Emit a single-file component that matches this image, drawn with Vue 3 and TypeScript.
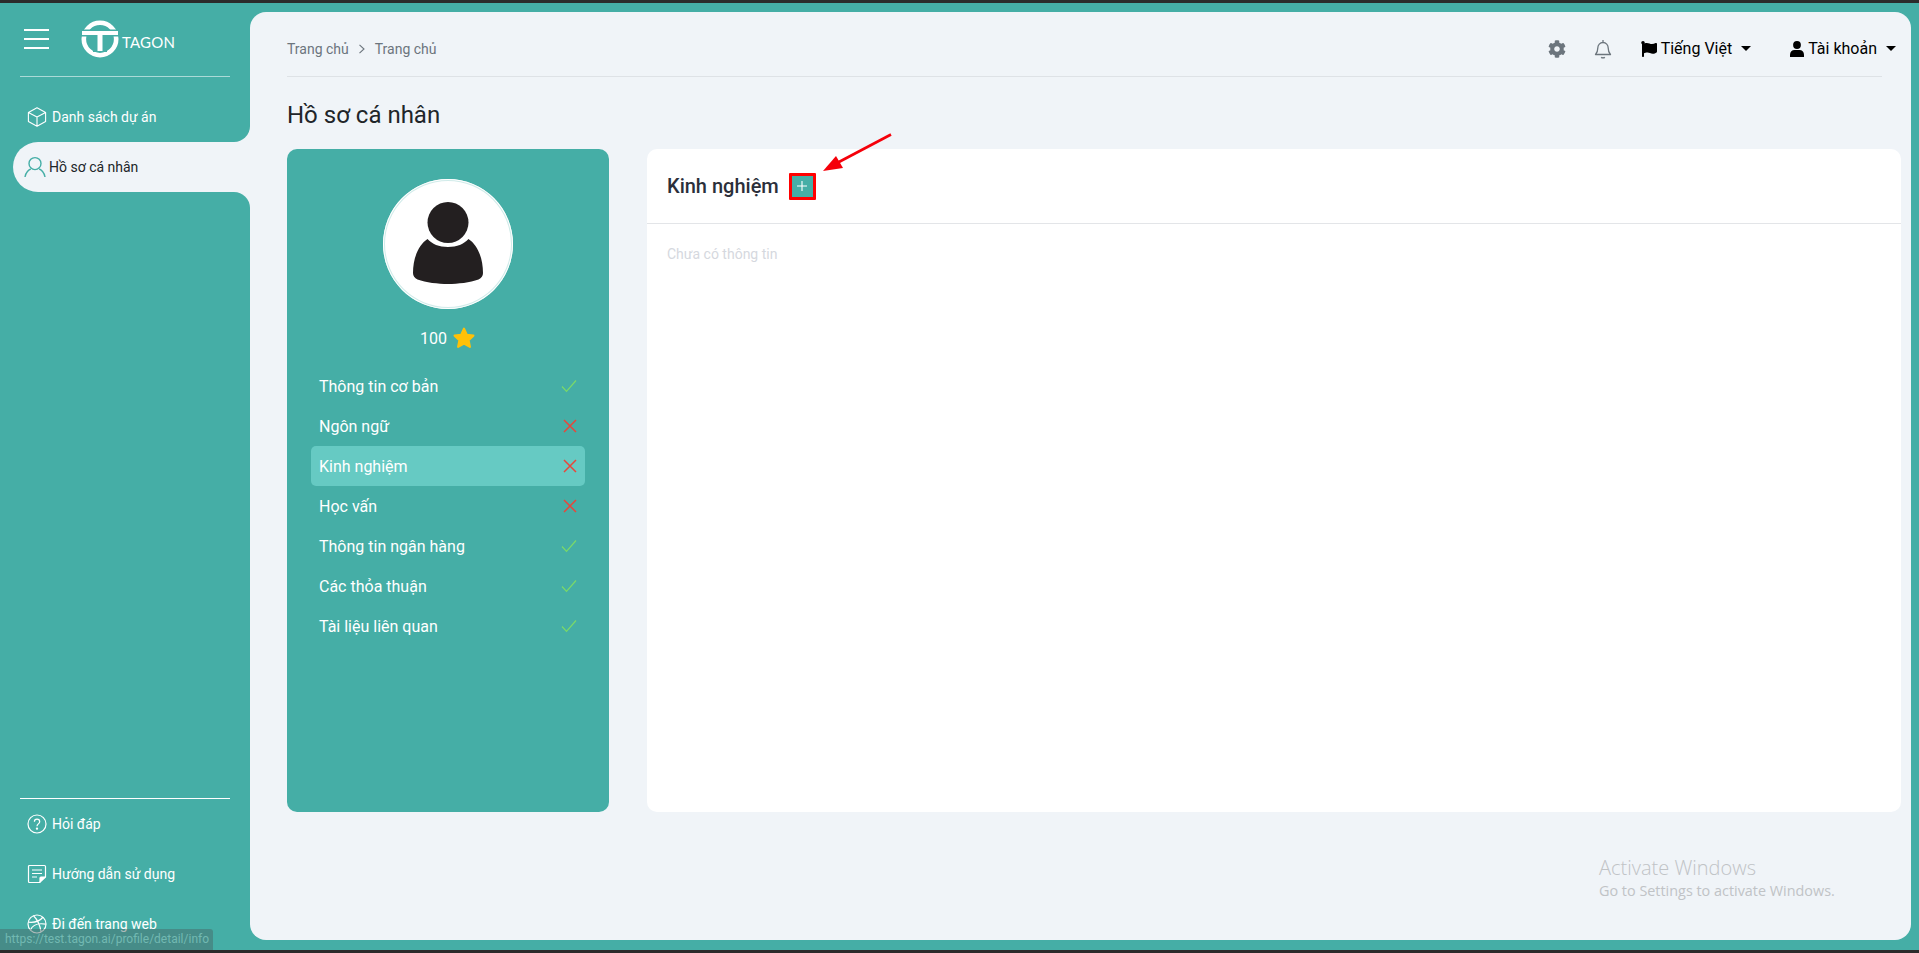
<script setup lang="ts">
interface Section {
  label: string
  done: boolean
  active?: boolean
}

const sections: Section[] = [
  { label: 'Thông tin cơ bản', done: true },
  { label: 'Ngôn ngữ', done: false },
  { label: 'Kinh nghiệm', done: false, active: true },
  { label: 'Học vấn', done: false },
  { label: 'Thông tin ngân hàng', done: true },
  { label: 'Các thỏa thuận', done: true },
  { label: 'Tài liệu liên quan', done: true },
]
</script>

<template>
  <div class="screen">
    <div class="shell">
      <aside class="sidebar">
        <div class="brand">
          <button class="burger" aria-label="menu"><span></span><span></span><span></span></button>
          <svg class="logo" width="38" height="38" viewBox="0 0 38 38">
            <circle cx="19" cy="19" r="16.2" fill="none" stroke="#fff" stroke-width="4.6" />
            <rect x="0" y="9.5" width="38" height="7" fill="#45aea6" />
            <rect x="1" y="11" width="36" height="4" fill="#fff" />
            <rect x="12" y="15" width="14" height="17" fill="#45aea6" />
            <rect x="16.5" y="14" width="5" height="17" fill="#fff" />
          </svg>
          <span class="brand-name">TAGON</span>
        </div>

        <nav class="nav-top">
          <a class="nav-item before-active">
            <svg width="20" height="20" viewBox="0 0 20 20" fill="none" stroke="#fff" stroke-width="1.1" stroke-linejoin="round"><path d="M10 .8l8.6 4.7v9L10 19.2l-8.6-4.7v-9zM1.4 5.500L10 10l8.6-4.500M10 10v9.200" /></svg>
            <span>Danh sách dự án</span>
          </a>
          <a class="nav-item active">
            <svg width="22" height="22" viewBox="0 0 22 22" fill="none" stroke="#45aea6" stroke-width="1.4"><circle cx="11" cy="7.6" r="6" /><path d="M1 21c.6-4.600 4-7.400 5.800-8M21 21c-.6-4.600-4-7.400-5.800-8" /></svg>
            <span>Hồ sơ cá nhân</span>
          </a>
          <div class="after-active"></div>
        </nav>

        <nav class="nav-bottom">
          <a class="nav-item">
            <svg width="20" height="20" viewBox="0 0 20 20" fill="none" stroke="#fff" stroke-width="1.2"><circle cx="10" cy="10" r="9" /><path d="M7.400 7.800C7.400 6.200 8.600 5.200 10 5.200s2.700 1 2.700 2.500c0 2.200-2.700 2.200-2.700 4.500" /><circle cx="10" cy="14.600" r=".6" fill="#fff" /></svg>
            <span>Hỏi đáp</span>
          </a>
          <a class="nav-item">
            <svg width="20" height="20" viewBox="0 0 20 20" fill="none" stroke="#fff" stroke-width="1.2" stroke-linejoin="round"><path d="M12.500 18.500H2.500a1 1 0 0 1-1-1v-15a1 1 0 0 1 1-1h15a1 1 0 0 1 1 1v10.500zM5 6h10M5 9.500h10M5 13h5" /><path d="M18.500 13h-4.500a1 1 0 0 0-1 1v4.500" fill="#fff" /></svg>
            <span>Hướng dẫn sử dụng</span>
          </a>
          <a class="nav-item">
            <svg width="20" height="20" viewBox="0 0 20 20" fill="none" stroke="#fff" stroke-width="1.2"><circle cx="10" cy="10" r="9" /><path d="M6.500 1.800c3.500 3.400 6.500 9.200 7.600 16.200M1.300 8.200c5.400.6 11.400-1 14.800-5.200M3.500 16c1.800-4.400 7-7.300 15.400-5.800" /></svg>
            <span>Đi đến trang web</span>
          </a>
        </nav>
      </aside>

      <main class="content">
        <header class="topbar">
          <div class="crumbs">
            <span>Trang chủ</span>
            <svg width="10" height="10" viewBox="0 0 10 10" fill="none" stroke="#6c757d" stroke-width="1.1"><path d="M2.500 .8L7 5 2.500 9.200" /></svg>
            <span>Trang chủ</span>
          </div>
          <div class="tools">
            <svg class="gear" width="18" height="18" viewBox="0 0 512 512" fill="#6c757d"><path d="M487.400 315.700l-42.600-24.600c4.300-23.200 4.300-47 0-70.200l42.600-24.600c4.900-2.800 7.100-8.600 5.500-14-11.100-35.600-30-67.800-54.700-94.600-3.800-4.100-10-5.100-14.800-2.300L380.800 110c-17.900-15.400-38.500-27.300-60.800-35.100V25.800c0-5.600-3.900-10.500-9.400-11.700-36.700-8.200-74.300-7.800-109.200 0-5.500 1.200-9.400 6.100-9.400 11.700V75c-22.200 7.900-42.800 19.800-60.800 35.100L88.700 85.500c-4.900-2.800-11-1.900-14.800 2.300-24.700 26.700-43.600 58.900-54.700 94.600-1.700 5.400.6 11.200 5.500 14L67.300 221c-4.300 23.200-4.300 47 0 70.200l-42.600 24.600c-4.900 2.800-7.100 8.600-5.500 14 11.100 35.600 30 67.800 54.700 94.600 3.800 4.100 10 5.100 14.800 2.300l42.600-24.600c17.900 15.400 38.500 27.300 60.800 35.100v49.200c0 5.600 3.900 10.500 9.400 11.700 36.700 8.200 74.300 7.800 109.200 0 5.500-1.200 9.400-6.100 9.400-11.700v-49.200c22.200-7.900 42.800-19.800 60.800-35.100l42.600 24.600c4.900 2.800 11 1.900 14.800-2.300 24.700-26.700 43.600-58.900 54.700-94.600 1.500-5.500-.7-11.300-5.600-14.100zM256 336c-44.100 0-80-35.900-80-80s35.900-80 80-80 80 35.900 80 80-35.900 80-80 80z" /></svg>
            <svg class="bell" width="18" height="20" viewBox="0 0 18 20" fill="none" stroke="#6c757d" stroke-width="1.3" stroke-linejoin="round"><path d="M1.500 15.500c1.500-1.500 2.300-3 2.300-6.500 0-3 2.200-5.500 5.200-5.500s5.200 2.500 5.200 5.500c0 3.500.8 5 2.300 6.500zM9 1v2.500M7.200 18.200c.8.900 2.800.9 3.600 0" /></svg>
            <div class="drop lang">
              <svg width="16" height="16" viewBox="0 0 512 512"><path d="M349.565 98.783C295.978 98.783 251.721 64 184.348 64c-24.955 0-47.309 4.384-68.045 12.013a55.947 55.947 0 0 0 3.586-23.562C118.117 24.015 94.806 1.206 66.338.048 34.345-1.254 8 24.296 8 56c0 19.026 9.497 35.825 24 45.945V488c0 13.255 10.745 24 24 24h16c13.255 0 24-10.745 24-24v-94.400c28.311-12.064 63.582-22.122 114.435-22.122 53.588 0 97.844 34.783 165.217 34.783 48.169 0 86.667-16.294 122.505-40.858C506.840 359.452 512 349.571 512 339.045v-243.100c0-23.393-24.269-38.870-45.485-29.016-34.338 15.948-76.454 31.854-116.950 31.854z" /></svg>
              <span>Tiếng Việt</span>
              <i class="caret"></i>
            </div>
            <div class="drop account">
              <svg width="14" height="16" viewBox="0 0 14 16"><circle cx="7" cy="4" r="3.900" /><path d="M0 16v-2.500C0 10.800 2 9 4.500 9h5C12 9 14 10.800 14 13.500V16z" /></svg>
              <span>Tài khoản</span>
              <i class="caret"></i>
            </div>
          </div>
        </header>

        <h1 class="page-title">Hồ sơ cá nhân</h1>

        <div class="columns">
          <section class="profile">
            <div class="avatar">
              <svg width="72" height="84" viewBox="0 0 72 84" fill="#231f20">
                <circle cx="36" cy="20.500" r="20.500" />
                <path d="M15.500 37c4.500 5 11.500 8 20.500 8s16-3 20.500-8C65.500 43 71 56 71 71c0 3-1.500 5-4.500 6.500C58 80.500 46 82 36 82s-22-1.500-30.500-4.500C2.500 76 1 74 1 71c0-15 5.500-28 14.500-34z" />
              </svg>
            </div>
            <div class="score">
              <span>100</span>
              <svg width="24" height="24" viewBox="0 0 22 22" fill="#ffc107" stroke="#ffc107" stroke-width="2" stroke-linejoin="round"><path d="M11 2.500l2.600 5.600 6 .7-4.400 4.200 1.200 6.100L11 16.100l-5.400 3 1.200-6.100-4.400-4.200 6-.7z" /></svg>
            </div>
            <ul class="sections">
              <li v-for="item in sections" :key="item.label" :class="{ current: item.active }">
                <span>{{ item.label }}</span>
                <svg v-if="item.done" width="16" height="14" viewBox="0 0 16 14" fill="none" stroke="#7bd968" stroke-width="1.200"><path d="M1 7.500l4.500 4.800L15 1.500" /></svg>
                <svg v-else width="14" height="14" viewBox="0 0 14 14" fill="none" stroke="#e8463a" stroke-width="1.500"><path d="M1 1l12 12M13 1L1 13" /></svg>
              </li>
            </ul>
          </section>

          <section class="detail">
            <div class="detail-head">
              <h2>Kinh nghiệm</h2>
              <button class="add">
                <svg width="10" height="10" viewBox="0 0 10 10" stroke="#fff" stroke-width="1.100"><path d="M5 0v10M0 5h10" /></svg>
              </button>
            </div>
            <p class="empty">Chưa có thông tin</p>
          </section>
        </div>
      </main>
    </div>

    <!-- annotation arrow drawn over the screenshot -->
    <svg class="arrow" width="70" height="42" viewBox="0 0 70 42">
      <path d="M68 1.500L14 30" stroke="#f5000a" stroke-width="2.600" />
      <path d="M0 38l13-15 7 12z" fill="#f5000a" />
    </svg>

    <div class="status-url">https://test.tagon.ai/profile/detail/info</div>

    <div class="watermark">
      <div class="wm-title">Activate Windows</div>
      <div class="wm-sub">Go to Settings to activate Windows.</div>
    </div>
  </div>
</template>

<style>
html,
body {
  margin: 0;
  background: #2e2e2e;
}
</style>

<style scoped>
.screen {
  position: relative;
  box-sizing: border-box;
  height: 953px;
  padding: 3px 0;
  overflow: hidden;
  background: #2b2b2b;
  font-family: Roboto, "Liberation Sans", sans-serif;
}

.shell {
  display: flex;
  height: 947px;
  background: #45aea6;
  padding: 9px 8px 10px 0;
  box-sizing: border-box;
}

/* Sidebar */
.sidebar {
  flex: 0 0 250px;
  display: flex;
  flex-direction: column;
  color: #fff;
  font-size: 14px;
}

.brand {
  position: relative;
  height: 64px;
  margin: 0 20px;
  display: flex;
  align-items: flex-start;
  border-bottom: 1px solid rgba(255, 255, 255, 0.55);
}

.burger {
  display: flex;
  flex-direction: column;
  gap: 7px;
  width: 25px;
  margin: 17px 0 0 4px;
  padding: 0;
  background: none;
  border: 0;
}

.burger span {
  display: block;
  height: 2px;
  background: #fff;
}

.logo {
  margin: 8px 0 0 32px;
}

.brand-name {
  margin: 21px 0 0 3px;
  font-family: Lato, sans-serif;
  font-weight: 400;
  font-size: 15px;
  letter-spacing: 0.2px;
  line-height: 18px;
  color: #fff;
}

.nav-top {
  margin-top: 15px;
  background: linear-gradient(#f0f4f8, #f0f4f8) right top / 20px 100% no-repeat;
}

.nav-item {
  display: flex;
  align-items: center;
  height: 50px;
  gap: 5px;
  padding-left: 27px;
  color: #fff;
  white-space: nowrap;
}

.before-active {
  background: #45aea6;
  border-bottom-right-radius: 16px;
}

.active {
  margin-left: 13px;
  padding-left: 11px;
  gap: 3px;
  color: #212529;
  background: #f0f4f8;
  border-radius: 25px 0 0 25px;
}

.after-active {
  height: 20px;
  background: #45aea6;
  border-top-right-radius: 16px;
}

.nav-bottom {
  margin: auto 20px 0;
  border-top: 1px solid #fff;
  height: 141px;
}

.nav-bottom .nav-item {
  margin: 0 -20px;
}

/* Content panel */
.content {
  flex: 1;
  min-width: 0;
  padding: 0 29px 0 37px;
  background: #f0f4f8;
  border-radius: 16px;
  color: #212529;
}

.topbar {
  display: flex;
  justify-content: space-between;
  align-items: center;
  box-sizing: border-box;
  height: 65px;
  padding-top: 9px;
  border-bottom: 1px solid #dee2e6;
}

.crumbs {
  display: flex;
  align-items: center;
  gap: 8px;
  font-size: 14px;
  color: #6c757d;
}

.tools {
  display: flex;
  align-items: center;
  margin-right: -14px;
  font-size: 16px;
  color: #000;
}

.gear {
  margin-right: 28px;
}

.bell {
  margin-right: 29px;
}

.drop {
  display: flex;
  align-items: center;
  gap: 4px;
}

.lang {
  margin-right: 39px;
}

.caret {
  display: inline-block;
  margin-left: 5px;
  border-top: 5px solid #000;
  border-left: 5px solid transparent;
  border-right: 5px solid transparent;
}

.page-title {
  margin: 24px 0 19px;
  font-size: 24px;
  line-height: 29px;
  font-weight: 400;
}

.columns {
  display: flex;
  gap: 38px;
  margin-right: -19px;
  height: 663px;
}

/* Left card */
.profile {
  flex: 0 0 322px;
  box-sizing: border-box;
  padding-top: 30px;
  background: #45aea6;
  border-radius: 10px;
  color: #fff;
}

.avatar {
  display: flex;
  align-items: center;
  justify-content: center;
  width: 130px;
  height: 130px;
  margin: 0 auto;
  background: #fff;
  border-radius: 50%;
  box-shadow: inset 0 0 0 1px #fff, inset 0 0 0 2px rgba(69, 174, 166, 0.25);
}

.score {
  display: flex;
  align-items: center;
  justify-content: center;
  gap: 5px;
  height: 24px;
  margin-top: 17px;
  font-size: 16px;
}

.sections {
  list-style: none;
  margin: 16px 24px 0;
  padding: 0;
  font-size: 16px;
}

.sections li {
  display: flex;
  align-items: center;
  justify-content: space-between;
  height: 40px;
  padding: 0 8px;
  border-radius: 5px;
}

.sections li.current {
  background: #66cac3;
}

/* Right card */
.detail {
  flex: 1;
  background: #fff;
  border-radius: 10px;
}

.detail-head {
  display: flex;
  align-items: center;
  gap: 10px;
  height: 74px;
  padding: 0 20px;
  border-bottom: 1px solid #e3e5e8;
}

.detail-head h2 {
  margin: 0;
  font-size: 20px;
  font-weight: 500;
  color: #2b2f3a;
}

.add {
  display: flex;
  align-items: center;
  justify-content: center;
  width: 27px;
  height: 27px;
  padding: 0;
  background: #45aea6;
  border: 3px solid #f00;
  border-radius: 1px;
}

.empty {
  margin: 22px 20px 0;
  font-size: 14px;
  color: #d5d8de;
}

/* Overlays */
.arrow {
  position: absolute;
  left: 823px;
  top: 133px;
}

.status-url {
  position: absolute;
  left: 0;
  top: 929px;
  width: 213px;
  height: 21px;
  box-sizing: border-box;
  padding-left: 5px;
  background: rgba(70, 100, 100, 0.45);
  border-radius: 0 3px 0 0;
  font-size: 12px;
  line-height: 21px;
  color: #72b9b2;
  white-space: nowrap;
}

.watermark {
  position: absolute;
  left: 1599px;
  top: 855px;
  font-family: "Open Sans", sans-serif;
  font-weight: 300;
  color: #c0c3c6;
}

.wm-title {
  font-size: 20px;
  line-height: 26px;
}

.wm-sub {
  font-size: 14.400px;
  font-weight: 400;
  line-height: 20px;
}
</style>
